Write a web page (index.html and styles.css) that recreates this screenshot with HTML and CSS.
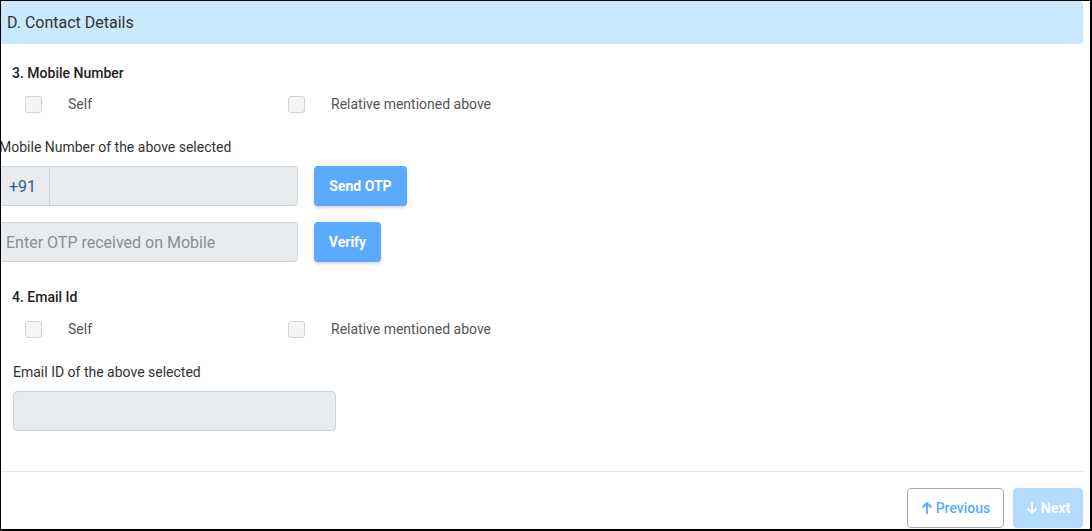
FILE: index.html
```html
<!DOCTYPE html>
<html lang="en">
<head>
    <meta charset="UTF-8">
    <meta name="viewport" content="width=device-width, initial-scale=1.0">
    <title>Contact Details</title>
    <link rel="stylesheet" href="styles.css">
</head>
<body>
    <div class="frame">
        <div class="section-head">D. Contact Details</div>

        <div class="form-body">
            <!-- Mobile number -->
            <div class="question">3. Mobile Number</div>
            <div class="options">
                <label class="option"><span class="check"></span>Self</label>
                <label class="option"><span class="check"></span>Relative mentioned above</label>
            </div>

            <div class="mobile-block">
                <div class="field-label">Mobile Number of the above selected</div>
                <div class="input-row">
                    <div class="input-group">
                        <span class="prefix">+91</span>
                        <input type="text" class="group-input">
                    </div>
                    <button class="btn-primary btn-otp" type="button">Send OTP</button>
                </div>
                <div class="input-row second">
                    <input type="text" class="text-input otp-input" placeholder="Enter OTP received on Mobile">
                    <button class="btn-primary btn-verify" type="button">Verify</button>
                </div>
            </div>

            <!-- Email -->
            <div class="question email-q">4. Email Id</div>
            <div class="options">
                <label class="option"><span class="check"></span>Self</label>
                <label class="option"><span class="check"></span>Relative mentioned above</label>
            </div>

            <div class="field-label email-label">Email ID of the above selected</div>
            <input type="text" class="text-input email-input">
        </div>

        <div class="footer">
            <button class="btn-prev" type="button">
                <svg width="12" height="14" viewBox="0 0 12 14"><path d="M6 13V2M1.5 6.5L6 2l4.5 4.5" fill="none" stroke="currentColor" stroke-width="1.8"/></svg>
                Previous
            </button>
            <button class="btn-next" type="button">
                <svg width="12" height="14" viewBox="0 0 12 14"><path d="M6 1v11M1.5 7.5L6 12l4.5-4.5" fill="none" stroke="currentColor" stroke-width="1.8"/></svg>
                Next
            </button>
        </div>
    </div>
</body>
</html>
```

FILE: styles.css
```css
body {
    margin: 0;
    padding: 0;
    background-color: #fff;
    font-family: Roboto, "Liberation Sans", Arial, sans-serif;
}
.frame {
    width: 1092px;
    height: 531px;
    box-sizing: border-box;
    border-style: solid;
    border-color: #000;
    border-width: 1px 2px 2px 1px;
    padding-right: 7px;
    overflow: hidden;
}
.section-head {
    height: 43px;
    display: flex;
    align-items: center;
    padding-left: 6px;
    background-color: #c9e9fd;
    border-radius: 0 4px 4px 0;
    font-size: 16px;
    color: #333;
}
.form-body {
    padding-left: 11px;
}
.question {
    margin-top: 19px;
    font-size: 14px;
    font-weight: 500;
    line-height: 20px;
    color: #222;
}
.email-q {
    margin-top: 25px;
}
.options {
    display: grid;
    grid-template-columns: 263px 263px;
    margin-top: 12px;
    padding-left: 13px;
}
.email-q + .options {
    margin-top: 13px;
}
.option {
    display: flex;
    align-items: center;
    height: 18px;
    font-size: 14px;
    color: #555;
}
.check {
    width: 17px;
    height: 17px;
    box-sizing: border-box;
    margin-right: 26px;
    background-color: #f4f6f6;
    border: 1px solid #d2d4d4;
    border-radius: 3px;
}
.field-label {
    font-size: 14px;
    line-height: 20px;
    color: #333;
}
.mobile-block {
    margin-top: 24px;
    margin-left: -13px;
}
.email-label {
    margin-top: 24px;
    margin-left: 1px;
}
.input-row {
    display: flex;
    gap: 16px;
    margin-top: 9px;
}
.input-row.second {
    margin-top: 16px;
}
.input-group {
    display: flex;
    width: 299px;
    height: 40px;
    box-sizing: border-box;
    background-color: #e9ecef;
    border: 1px solid #cfd2d4;
    border-radius: 4px;
}
.prefix {
    width: 50px;
    box-sizing: border-box;
    padding-left: 9px;
    display: flex;
    align-items: center;
    border-right: 1px solid #cfd2d4;
    font-size: 16px;
    color: #2f5a88;
}
.group-input {
    flex: 1;
    border: none;
    background: transparent;
    outline: none;
}
.text-input {
    height: 40px;
    box-sizing: border-box;
    padding: 0 6px;
    background-color: #e9ecef;
    border: 1px solid #cfd2d4;
    border-radius: 4px;
    font-family: inherit;
    font-size: 16px;
    color: #333;
    outline: none;
}
.text-input::placeholder {
    color: #8a8d90;
}
.otp-input {
    width: 299px;
}
.email-input {
    display: block;
    width: 323px;
    margin-top: 9px;
    margin-left: 1px;
}
.btn-primary {
    height: 40px;
    padding: 0;
    background-color: #5aabff;
    color: #fff;
    border: none;
    border-radius: 4px;
    box-shadow: 0 2px 3px rgba(0,0,0,0.15);
    font-family: inherit;
    font-size: 14px;
    font-weight: 700;
    cursor: pointer;
}
.btn-otp {
    width: 93px;
}
.btn-verify {
    width: 67px;
}
.footer {
    margin-top: 40px;
    border-top: 1px solid #e3e3e3;
    padding-top: 16px;
    display: flex;
    justify-content: flex-end;
    gap: 9px;
}
.btn-prev,
.btn-next {
    height: 40px;
    display: flex;
    align-items: center;
    justify-content: center;
    gap: 3px;
    border-radius: 4px;
    font-family: inherit;
    font-size: 14px;
    font-weight: 500;
    cursor: pointer;
}
.btn-prev {
    width: 97px;
    background-color: #fff;
    color: #5aabff;
    border: 1px solid #aaa;
}
.btn-next {
    width: 70px;
    background-color: #b3dcfe;
    color: #fff;
    border: none;
    font-weight: 700;
}
```
